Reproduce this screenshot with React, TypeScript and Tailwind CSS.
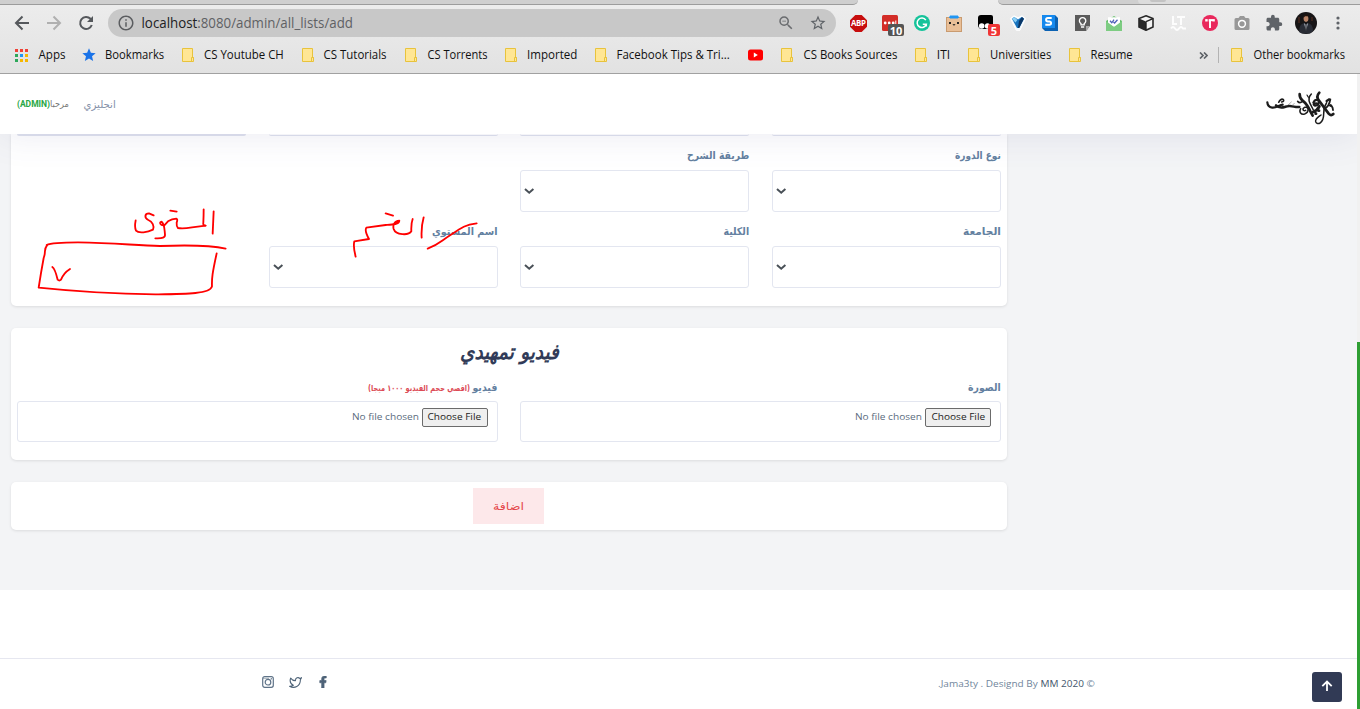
import { useLayoutEffect, useRef, useState } from "react";
import type { ReactNode } from "react";
import { MdInfoOutline, MdZoomOut, MdStarBorder, MdStar, MdExtension } from "react-icons/md";
import { FaFacebookF } from "react-icons/fa";
import { FiTwitter } from "react-icons/fi";

/** Sets one line of text so that it fills the width of its box. */
function Fit({ className, children }: { className: string; children: ReactNode }) {
  const box = useRef<HTMLSpanElement>(null);
  const inner = useRef<HTMLSpanElement>(null);
  const [scale, setScale] = useState(1);
  useLayoutEffect(() => {
    if (box.current && inner.current && inner.current.offsetWidth) {
      setScale(box.current.offsetWidth / inner.current.offsetWidth);
    }
  }, []);
  return (
    <span ref={box} className={`flex shrink-0 items-center justify-center whitespace-nowrap ${className}`}>
      <span ref={inner} className="inline-block shrink-0" style={{ transform: `scaleX(${scale})` }}>
        {children}
      </span>
    </span>
  );
}

function Folder() {
  return (
    <svg className="h-[14px] w-3 shrink-0" viewBox="0 0 12 14">
      <path d="M.5.5h10v9h1v4H.5z" fill="#ffe694" stroke="#e8c33c" />
      <path d="M9.5 13V9.5h2V13" fill="#ffe694" stroke="#e8c33c" />
    </svg>
  );
}

const folders = [
  { name: "CS Youtube CH", width: "w-[80px]", gap: "ml-[18px]" },
  { name: "CS Tutorials", width: "w-[63px]", gap: "ml-[18px]" },
  { name: "CS Torrents", width: "w-[60px]", gap: "ml-[18px]" },
  { name: "Imported", width: "w-[50px]", gap: "ml-[18px]" },
  { name: "Facebook Tips & Tri...", width: "w-[113px]", gap: "ml-[18px]" },
];
const moreFolders = [
  { name: "CS Books Sources", width: "w-[94px]", gap: "ml-[18px]" },
  { name: "ITI", width: "w-[13px]", gap: "ml-[18px]" },
  { name: "Universities", width: "w-[61px]", gap: "ml-[18px]" },
  { name: "Resume", width: "w-[42px]", gap: "ml-[18px]" },
];

function FolderLink({ name, width, gap }: { name: string; width: string; gap: string }) {
  return (
    <div className={`flex shrink-0 items-center gap-[10px] ${gap}`}>
      <Folder />
      <Fit className={width}>{name}</Fit>
    </div>
  );
}

function Cell({ children }: { children: ReactNode }) {
  return <div className="relative flex h-8 w-8 shrink-0 items-center justify-center">{children}</div>;
}

function Extensions() {
  return (
    <div className="flex items-center">
      <Cell>
        <svg width="17" height="17" viewBox="0 0 16 16">
          <path d="M5 0h6l5 5v6l-5 5H5l-5-5V5z" fill="#c70d0d" />
          <text x="8" y="10.8" fontSize="7.4" fontWeight="700" fill="#fff" textAnchor="middle" textLength="14" fontFamily="Open Sans">ABP</text>
        </svg>
      </Cell>
      <Cell>
        <svg width="16" height="16" viewBox="0 0 16 16">
          <rect width="16" height="16" rx="1.5" fill="#d32d27" />
          <circle cx="3.2" cy="8" r="1.4" fill="#fff" /><circle cx="7.2" cy="8" r="1.4" fill="#fff" /><circle cx="11.2" cy="8" r="1.4" fill="#fff" />
          <path d="M13.8 5.5v5" stroke="#fff" />
        </svg>
        <span className="absolute left-[14px] top-[17px] flex h-3 w-4 items-center justify-center rounded-[2px] bg-[#555] text-[11px] font-bold leading-none text-white">10</span>
      </Cell>
      <Cell>
        <svg width="16" height="16" viewBox="0 0 16 16">
          <circle cx="8" cy="8" r="8" fill="#15c39a" />
          <path d="M11.8 5.2A4.7 4.7 0 1 0 12.3 9.3H8.800M12.300 8.600v3" fill="none" stroke="#fff" strokeWidth="1.5" />
        </svg>
      </Cell>
      <Cell>
        <svg width="16" height="17" viewBox="0 0 16 17">
          <rect x=".5" y="2.5" width="15" height="14" fill="#e9bf97" stroke="#c99b70" />
          <path d="M4 .5h8v3H4z" fill="#2196f3" />
          <path d="M3 2.200h10" stroke="#2196f3" strokeWidth="1.4" />
          <rect x="3" y="7" width="2" height="2" fill="#222" /><rect x="11" y="7" width="2" height="2" fill="#222" />
          <path d="M7 9.300q1 1.200 2 0" stroke="#222" strokeWidth="1.3" fill="none" />
        </svg>
      </Cell>
      <Cell>
        <svg width="16" height="16" viewBox="0 0 16 16">
          <path d="M3 0h10q2 0 2 2v12H3q-3-1-3-4V3q0-3 3-3z" fill="#000" />
          <circle cx="3.7" cy="11" r="2.8" fill="#fff" /><circle cx="9.5" cy="11" r="2.7" fill="#fff" />
        </svg>
        <span className="absolute left-[18px] top-[17px] flex h-3 w-3 items-center justify-center rounded-[2px] bg-[#f03636] text-[11px] font-bold leading-none text-white">5</span>
      </Cell>
      <Cell>
        <svg width="16" height="16" viewBox="0 0 16 16">
          <path d="M.5 3.5 4 .8l4 2 4-2 3.500 2.700L10 15.300H6.300z" fill="#eef6fc" stroke="#fff" />
          <path d="M2 3.700 4.200 2 8 4.500 11.800 2 14 3.700 9.200 13H7z" fill="#1672bd" />
          <path d="M9 6 12 2l2 1.700L9.200 13H8z" fill="#0b3767" /><path d="m4.400 2 3 3-2 2.400L2 3.700z" fill="#8bd0f5" />
        </svg>
      </Cell>
      <Cell>
        <svg width="16" height="16" viewBox="0 0 16 16">
          <path d="M0 0h13l3 3v13H3l-3-3z" fill="#0c62b3" /><path d="M0 0h13v13H0z" fill="#1589ee" />
          <path d="M9.700 3H5.800a1.700 1.700 0 0 0 0 3.400h1.600a1.700 1.700 0 0 1 0 3.400H3.300" fill="none" stroke="#fff" strokeWidth="2" />
        </svg>
      </Cell>
      <Cell>
        <svg width="15" height="16" viewBox="0 0 15 16">
          <path d="M0 0h15v11l-4 5H0z" fill="#5b5b5b" /><path d="M15 11h-4v5z" fill="#aaa" />
          <path d="M6 9.800V8.600a3.200 3.200 0 1 1 3.200 0v1.200zM6 12h3.200" fill="none" stroke="#fff" strokeWidth="1.3" />
        </svg>
      </Cell>
      <Cell>
        <svg width="16" height="15" viewBox="0 0 16 15">
          <path d="M0 5 8 0l8 5v10H0z" fill="#64bf6a" /><path d="M2 1.300h12V8l-6 3-6-3z" fill="#fff" />
          <path d="m0 5 8 6 8-6v10H0z" fill="#7dcc82" /><path d="m4 4.800 1.800 2L8 3.700M7.400 6l1.200 1L11.500 3.700" fill="none" stroke="#5061b9" strokeWidth="1.3" />
        </svg>
      </Cell>
      <Cell>
        <svg width="16" height="16" viewBox="0 0 16 16">
          <path d="m8 .8 7 2.800v8.300l-7 3.400-7-3.400V3.600z" fill="#f3f3f3" stroke="#292929" strokeWidth="1.6" />
          <path d="m1 3.600 7 3v8.700l-7-3.400z" fill="#292929" /><path d="m8 6.600 7-3M8 7v8" stroke="#222" strokeWidth="1.4" />
        </svg>
      </Cell>
      <Cell>
        <svg width="17" height="16" viewBox="0 0 17 16" fill="none" stroke="#fdfdfd" strokeWidth="2">
          <path d="M3 1v8h4M7 2h8M11 2v8" /><path d="M1 13.500q2-3 4 0t4 0 4 0h3" />
        </svg>
      </Cell>
      <Cell>
        <svg width="16" height="16" viewBox="0 0 16 16">
          <circle cx="8" cy="8" r="8" fill="#e9285c" />
          <path d="M3.200 5.300h9.600" stroke="#fff" strokeWidth="2.4" /><path d="M8 5v8" stroke="#fff" strokeWidth="1.9" />
          <path d="M6.200 4v3M9.800 6v2" stroke="#e9285c" strokeWidth="1" />
        </svg>
      </Cell>
      <Cell>
        <svg width="16" height="14" viewBox="0 0 16 14">
          <path d="M4.500 2 6 0h4l1.500 2H14q1.500 0 1.500 1.500v9Q15.500 14 14 14H2Q.5 14 .5 12.500v-9Q.5 2 2 2z" fill="#989898" />
          <circle cx="8" cy="7.800" r="3.400" fill="none" stroke="#fff" strokeWidth="1.500" />
        </svg>
      </Cell>
      <Cell><MdExtension className="h-[18px] w-[18px] text-[#5f6368]" /></Cell>
      <Cell>
        <svg width="22" height="22" viewBox="0 0 22 22">
          <circle cx="11" cy="11" r="11" fill="#171516" />
          <path d="M4 20q0-8 5-9l2 2 2-2q5 1 5 8l-3 2.500H7z" fill="#292c35" />
          <ellipse cx="11" cy="6.600" rx="2.400" ry="3.300" fill="#b98468" /><path d="M8.500 6q0-4 3-3.700 2.500.2 2.200 3.400l-1-1.500H10z" fill="#21150f" />
          <path d="m9 11 2 2 2-2-2 8z" fill="#bcc2d0" /><path d="M11 12.500v6" stroke="#111" />
          <path d="M4 5v6M17 5v4" stroke="#5b2f20" />
        </svg>
      </Cell>
      <Cell>
        <svg width="4" height="14" viewBox="0 0 4 14" fill="#5f6368"><circle cx="2" cy="2" r="1.600" /><circle cx="2" cy="7" r="1.600" /><circle cx="2" cy="12" r="1.600" /></svg>
      </Cell>
    </div>
  );
}

function NavButtons() {
  return (
    <div className="flex w-[108px] shrink-0 gap-3 pl-[12px]">
      <svg width="20" height="20" viewBox="0 0 20 20" fill="none" stroke="#55585c" strokeWidth="2"><path d="M17 10H4.500M10.500 3.500 4 10l6.500 6.500" /></svg>
      <svg width="20" height="20" viewBox="0 0 20 20" fill="none" stroke="#b0b0b0" strokeWidth="2"><path d="M3 10h12.500M9.500 3.500 16 10l-6.500 6.500" /></svg>
      <svg width="20" height="20" viewBox="0 0 20 20"><path d="M15.800 12A6 6 0 1 1 14.500 5.800L16 7.300" fill="none" stroke="#55585c" strokeWidth="2" /><path d="M17 3v6h-6z" fill="#55585c" /></svg>
    </div>
  );
}

function BrowserChrome() {
  return (
    <div dir="ltr" className="flex h-[74px] w-full shrink-0 flex-col border-b border-[#a1a1a1] bg-linear-to-b from-[#ededed] to-[#e2e2e2] font-['Open_Sans',sans-serif]">
      <div className="flex h-[5px] justify-between">
        <div className="h-[5px] w-[858px] rounded-br-[6px] border-b border-[#9c9c9c] bg-[#cfcfcf]" />
        <div className="flex h-[5px] w-[362px] rounded-bl-[6px] border-b border-[#9c9c9c] bg-[#cfcfcf]">
          <div className="ml-[140px] flex h-1 w-[222px] rounded-bl-[4px] bg-[#dcdcdc] pl-3">
            <div className="h-[2px] w-4 rounded-b-full bg-[#c3c3c3]" />
          </div>
        </div>
      </div>
      <div className="flex h-9 items-center">
        <NavButtons />
        <div className="flex h-7 w-[728px] items-center rounded-full bg-[#c8c8c8] pl-[9px] pr-[9px]">
          <MdInfoOutline className="mr-[7px] h-[18px] w-[18px] text-[#5b5d60]" />
          <Fit className="w-[211px] text-[14px] leading-5 text-[#5f6164]"><span className="text-[#202124]">localhost</span>:8080/admin/all_lists/add</Fit>
          <MdZoomOut className="ml-auto mr-[14px] h-[18px] w-[18px] text-[#6a6c6f]" />
          <MdStarBorder className="h-[18px] w-[18px] text-[#5f6368]" />
        </div>
        <div className="ml-[6px]"><Extensions /></div>
      </div>
      <div className="flex h-7 items-center pl-[15px] text-[12px] leading-4 text-[#111]">
        <div className="mr-[10px] grid grid-cols-3 gap-[2px]">
          <i className="h-[3px] w-[3px] bg-[#ef4136]" /><i className="h-[3px] w-[3px] bg-[#ef4136]" /><i className="h-[3px] w-[3px] bg-[#ef4136]" />
          <i className="h-[3px] w-[3px] bg-[#2da85a]" /><i className="h-[3px] w-[3px] bg-[#2196f3]" /><i className="h-[3px] w-[3px] bg-[#f6b700]" />
          <i className="h-[3px] w-[3px] bg-[#2da85a]" /><i className="h-[3px] w-[3px] bg-[#f6b700]" /><i className="h-[3px] w-[3px] bg-[#f6b700]" />
        </div>
        <Fit className="w-[27px]">Apps</Fit>
        <MdStar className="ml-[16px] h-4 w-4 shrink-0 text-[#1a73e8]" />
        <Fit className="ml-[8px] w-[59px]">Bookmarks</Fit>
        {folders.map((item) => <FolderLink key={item.name} {...item} />)}
        <svg className="ml-[18px] h-3 w-[15px] shrink-0" viewBox="0 0 15 12">
          <rect y=".5" width="15" height="11" rx="2.5" fill="#f00" /><path d="m5.8 3.5 4 2.500-4 2.500z" fill="#fff" />
        </svg>
        {moreFolders.map((item) => <FolderLink key={item.name} {...item} />)}
        <svg className="ml-[66px] h-[7px] w-[9px] shrink-0" viewBox="0 0 9 7" fill="none" stroke="#5f6368" strokeWidth="1.700">
          <path d="m1 .5 3 3-3 3M5 .5l3 3-3 3" />
        </svg>
        <div className="ml-[10px] h-4 w-px shrink-0 bg-[#b3b3b3]" />
        <FolderLink name="Other bookmarks" width="w-[92px]" gap="ml-[12px]" />
      </div>
    </div>
  );
}

function Logo() {
  return (
    <svg className="h-[42px] w-[78px]" viewBox="0 0 234 126" fill="none" stroke="#1c1c1c" strokeLinecap="round" strokeLinejoin="round">
      <path d="M16 49q1 14 15 16c13 1 21-8 31-9" strokeWidth="6.500" />
      <path d="M42 58c12 12 22 5 34 3 14-3 23 4 36 2" strokeWidth="7.500" />
      <path d="M50 49q6-12 14-9 4 6-5 8" strokeWidth="4.500" />
      <path d="M78 57l10-9m3 10 6-6" strokeWidth="2" stroke="#888" />
      <path d="M116 68c-6 10 1 19 12 16 14-5 13-24 0-20-9 4-4 13 3 9" strokeWidth="4.500" />
      <path d="M107 46q6 7 14 1" strokeWidth="5" />
      <path d="M113 24q-1 11 9 20 14 11 25 36l5 9" strokeWidth="8" />
      <path d="M148 24q-12 12-4 28l10 20" strokeWidth="4.500" />
      <path d="M135 27l4 7" strokeWidth="3.500" />
      <path d="M172 20q-11 12-1 24l29 39q7 8 14 1" strokeWidth="8" />
      <path d="M154 50c6-13 16-9 17-2 0 9-13 15-16 8q6-8 14-1" strokeWidth="6.500" />
      <path d="M153 78q14-6 19-17m-2 13h1m-10 9h1" strokeWidth="8.500" />
      <path d="M194 50q-9 14-9 33c0 28-19 37-24 24-2-9 8-14 16-20" strokeWidth="4.500" />
      <path d="M187 68q14-5 18-28m-4 18q11-1 12 14" strokeWidth="5.500" />
      <path d="M194 45l7-5m5 18 1 1" strokeWidth="7" />
    </svg>
  );
}

function SiteHeader() {
  return (
    <header dir="ltr" className="relative z-10 flex h-[60px] shrink-0 items-center bg-white pl-[17px] pr-[17px] font-['DejaVu_Sans',sans-serif] shadow-[0_0_36px_rgba(82,85,145,0.13)]">
      <Fit className="w-[33px] text-[8.5px] font-bold text-[#28a745] font-['Roboto',sans-serif]">(ADMIN)</Fit>
      <Fit className="mt-px w-[19px] text-[9px] text-[#777]">مرحبا</Fit>
      <Fit className="ml-[15px] mt-px w-[32px] text-[10.5px] text-[#8490a8]">انجليزي</Fit>
      <div className="ml-auto mt-[6px]"><Logo /></div>
    </header>
  );
}

function Label({ width, children }: { width: string; children: string }) {
  return <Fit className={`h-4 text-[10.5px] font-bold leading-4 text-[#6380a0] ${width}`}>{children}</Fit>;
}

function SelectField({ label, width }: { label: string; width: string }) {
  return (
    <div className="flex flex-col items-start">
      <Label width={width}>{label}</Label>
      <div className="mt-[7px] flex h-[42px] w-full items-center justify-end rounded-[3px] border border-[#e3e6f0] bg-white pl-[3px]">
        <svg width="11" height="8" viewBox="0 0 11 8"><path d="m1 2 4.200 3.700L9.400 2" fill="none" stroke="#495057" strokeWidth="2" /></svg>
      </div>
    </div>
  );
}

function FileInput() {
  return (
    <div className="flex h-[41px] w-full items-start gap-[3px] rounded-[3px] border border-[#e3e6f0] pr-[9px] pt-[6px] font-['Open_Sans',sans-serif] text-[9.5px]">
      <span className="flex h-[19px] w-[66px] items-center justify-center rounded-[2px] border border-[#6b6b6b] bg-[#efefef] pb-[2px] text-[#222]">
        <Fit className="w-[54px] leading-4">Choose File</Fit>
      </span>
      <Fit className="h-[17px] w-[67px] leading-4 text-[#5c6c80]">No file chosen</Fit>
    </div>
  );
}

function PenMarks() {
  return (
    <svg className="pointer-events-none absolute left-0 top-0 z-20 h-[320px] w-[520px]" viewBox="0 0 520 320" fill="none" stroke="#ff0000" strokeWidth="5.500" strokeLinecap="round" strokeLinejoin="round">
      <g transform="translate(0 130) scale(.33333)">
        <path d="M407 271q-4 20 1 31c8 9 35 5 51-3 5-11-2-24-14-29-13-7-11-20 2-20l14 6" />
        <path d="M466 325c22 1 30-2 29-12-2-17-1-31-10-38-9 1-4 13 8 11l11-12q12-7 25-8 5 1 1 12-1 11 4 16 14 3 42-2 24-3 41-5" />
        <path d="M616 287q-8-1-6-10 1-20 1-39M641 244l-3 67M511 242l19 3" />
        <path d="M140 345q16-8 94-8c112 1 175 10 246 11 77-3 145-4 197 8" />
        <path d="M141 346c-11 14-2 17-10 38q-8 43-15 89 172 18 350 20c91-1 165-1 170-24-1-24 1-39 14-99" />
        <path d="M157 411q8 5 16 38 5 5 10 0 8-20 27-32" />
      </g>
      <g transform="translate(250 130) scale(.33333)">
        <path d="m407 250 22 7M521 262q-8 29-6 61M488 267q-5 13-4 37c-8 13-47 12-53-7-3-11 1-24 17-25-1 12-21 12-41 13l-58 8q-6 9 8 34l-44 7q-4 16 4 46" />
        <path d="M533 356c34-12 38-22 72-43 30-21 42-29 75-33" />
      </g>
    </svg>
  );
}

function InstagramMark() {
  return (
    <svg width="12" height="12" viewBox="0 0 12 12" fill="none" stroke="#5f7388" strokeWidth="1.200">
      <rect x=".7" y=".7" width="10.600" height="10.600" rx="2" /><circle cx="6" cy="6.200" r="2.800" /><path d="M8.800 2.700h1" strokeWidth="1.500" /><path d="M1 2.300h6" strokeWidth=".6" />
    </svg>
  );
}

export default function App() {
  return (
    <div className="relative flex h-[709px] w-[1360px] flex-col overflow-hidden bg-white">
      <BrowserChrome />
      <div className="flex min-h-0 flex-1">
        <div dir="rtl" className="flex min-w-0 flex-1 flex-col overflow-hidden font-['DejaVu_Sans',sans-serif]">
          <SiteHeader />
          <main className="flex h-[456px] shrink-0 flex-col bg-[#f3f4f6] pl-[11px] pr-[350px]">
            <section className="h-[172px] shrink-0 rounded-b-[5px] bg-white px-[6px] shadow-[0_1px_3px_rgba(0,0,0,0.1)]">
              <div className="grid grid-cols-4 gap-x-[22.67px]">
                <div className="h-[2px] rounded-b-[3px] border-b border-[#dfe2ee]" />
                <div className="h-[2px] rounded-b-[3px] border-b border-[#dfe2ee]" />
                <div className="h-[2px] rounded-b-[3px] border-b border-[#dfe2ee]" />
                <div className="h-[2px] rounded-b-[3px] bg-[#dfe2ee]" />
              </div>
              <div className="grid grid-cols-4 gap-x-[22.67px] gap-y-[11px] pt-[11px]">
                <SelectField label="نوع الدورة" width="w-[46px]" />
                <div className="col-span-3 grid grid-cols-3 gap-x-[22.67px]"><SelectField label="طريقة الشرح" width="w-[62px]" /></div>
                <SelectField label="الجامعة" width="w-[38px]" />
                <SelectField label="الكلية" width="w-[26px]" />
                <SelectField label="اسم المستوي" width="w-[66px]" />
              </div>
            </section>
            <section className="mt-[22px] h-[132px] shrink-0 rounded-[5px] bg-white px-[6px] shadow-[0_1px_3px_rgba(0,0,0,0.1)]">
              <h2 className="flex h-[51px] items-center justify-center text-[21px] font-bold italic leading-6 text-[#313b58]">
                <Fit className="w-[99px] pb-[3px]">فيديو تمهيدي</Fit>
              </h2>
              <div className="grid grid-cols-2 gap-x-[22.67px]">
                <div>
                  <Label width="w-[33px]">الصورة</Label>
                  <div className="mt-[6px]"><FileInput /></div>
                </div>
                <div>
                  <div className="flex items-center gap-[3px]">
                    <Label width="w-[25px]">فيديو</Label>
                    <Fit className="h-4 w-[102px] pt-px text-[8.5px] font-bold leading-4 text-[#dc4a55]">(اقصي حجم الفيديو ١٠٠٠ ميجا)</Fit>
                  </div>
                  <div className="mt-[6px]"><FileInput /></div>
                </div>
              </div>
            </section>
            <section className="mt-[22px] flex h-[48px] shrink-0 items-center justify-center rounded-[5px] bg-white pr-px shadow-[0_1px_3px_rgba(0,0,0,0.1)]">
              <button className="flex h-9 w-[71px] items-center justify-center bg-[#fde8ea] pt-[2px] text-[11px] text-[#e5484d]"><Fit className="w-[31px]">اضافة</Fit></button>
            </section>
          </main>
          <footer className="flex flex-1 flex-col bg-white pt-[68px]">
            <div dir="ltr" className="flex h-[51px] items-center border-t border-[#e6e7f0] pl-[262px] pr-[15px] text-[#4e6378]">
              <div className="mb-[4px] flex items-center">
                <InstagramMark />
                <FiTwitter className="ml-[15px] h-[13px] w-[13px]" />
                <FaFacebookF className="ml-[15px] h-3 w-3 stroke-current stroke-[30]" />
              </div>
              <Fit className="ml-auto w-[157px] pt-px font-['Open_Sans',sans-serif] text-[9.5px] text-[#71869c]">.Jama3ty . Designd By <span className="text-[#44566c]">MM 2020</span> ©</Fit>
              <button className="ml-[217px] mt-[6px] flex h-[30px] w-[30px] items-center justify-center rounded-[3px] bg-[#313a55] pb-[3px] text-white">
                <svg width="12" height="12" viewBox="0 0 12 12" fill="none" stroke="#fff" strokeWidth="1.800"><path d="M6 11V1.800M1.300 6.200 6 1.500l4.700 4.700" /></svg>
              </button>
            </div>
          </footer>
        </div>
        <div className="flex w-[3px] shrink-0 flex-col bg-[#f1f1f1] pt-[268px]"><div className="flex-1 bg-[#2e9e33]" /></div>
      </div>
      <PenMarks />
    </div>
  );
}
